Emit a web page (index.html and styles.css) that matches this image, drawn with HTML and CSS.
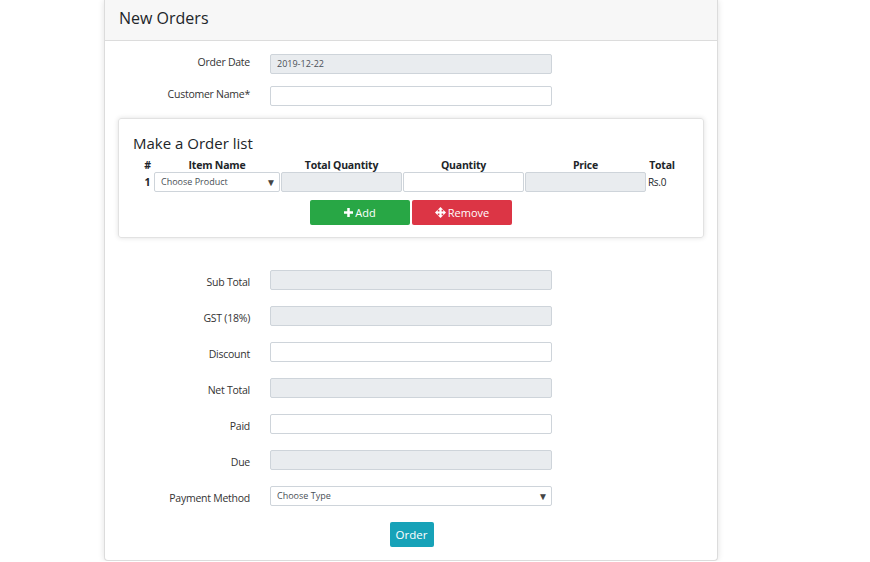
FILE: index.html
```html
<!DOCTYPE html>
<html>
<head>
<meta charset="utf-8">
<link rel="stylesheet" href="styles.css">
</head>
<body>
<div class="card">
  <div class="card-header">New Orders</div>
  <div class="card-body">
    <div class="row"><label class="lbl">Order Date</label><div class="field dis">2019-12-22</div></div>
    <div class="row"><label class="lbl">Customer Name*</label><div class="field"></div></div>

    <div class="inner">
      <div class="inner-title">Make a Order list</div>
      <div class="tbl">
        <div class="th">#</div>
        <div class="th">Item Name</div>
        <div class="th">Total Quantity</div>
        <div class="th">Quantity</div>
        <div class="th">Price</div>
        <div class="th">Total</div>
        <div class="td num">1</div>
        <div class="field sel small">Choose Product<span class="arrow">▼</span></div>
        <div class="field dis"></div>
        <div class="field"></div>
        <div class="field dis"></div>
        <div class="td rs">Rs.0</div>
      </div>
      <div class="btns">
        <div class="btn green"><svg class="ico" viewBox="0 0 10 10"><path d="M3.6 0h2.8v3.6H10v2.8H6.4V10H3.6V6.4H0V3.6h3.6z" fill="#fff"/></svg>Add</div>
        <div class="btn red"><svg class="ico mv" viewBox="0 0 12 12"><path d="M6 0L9 3H7.2V4.8H9V3L12 6 9 9V7.2H7.2V9H9L6 12 3 9H4.8V7.2H3V9L0 6 3 3V4.8H4.8V3H3z" fill="#fff"/></svg>Remove</div>
      </div>
    </div>

    <div class="totals">
      <div class="row r2"><label class="lbl">Sub Total</label><div class="field dis"></div></div>
      <div class="row r2"><label class="lbl">GST (18%)</label><div class="field dis"></div></div>
      <div class="row r2"><label class="lbl">Discount</label><div class="field"></div></div>
      <div class="row r2"><label class="lbl">Net Total</label><div class="field dis"></div></div>
      <div class="row r2"><label class="lbl">Paid</label><div class="field"></div></div>
      <div class="row r2"><label class="lbl">Due</label><div class="field dis"></div></div>
      <div class="row r2"><label class="lbl">Payment Method</label><div class="field sel">Choose Type<span class="arrow">▼</span></div></div>
    </div>
    <div class="order-wrap"><div class="btn teal">Order</div></div>
  </div>
</div>
</body>
</html>
```

FILE: styles.css
```css
* { box-sizing: border-box; }
body {
  margin: 0;
  background: #fff;
  font-family: "Open Sans", "Noto Sans", sans-serif;
  color: #212529;
}
.card {
  margin-left: 104px;
  width: 614px;
  height: 561px;
  border: 1px solid #dcdcdc;
  border-top: none;
  border-radius: 0 0 4px 4px;
  box-shadow: 0 0 6px rgba(0,0,0,0.12);
  background: #fff;
}
.card-header {
  height: 41px;
  background: #f7f7f7;
  border-bottom: 1px solid #dcdcdc;
  padding-left: 14px;
  font-size: 16px;
  line-height: 37px;
  color: #212529;
}
.card-body {
  padding: 13px 13px 0 13px;
}
.row {
  display: flex;
  align-items: center;
  gap: 20px;
  height: 20px;
  margin-bottom: 12px;
}
.lbl {
  width: 132px;
  text-align: right;
  font-size: 10.5px;
  color: #333;
  letter-spacing: -0.25px;
  position: relative;
  top: -2px;
}
.field {
  width: 282px;
  height: 20px;
  border: 1px solid #ced4da;
  border-radius: 2px;
  background: #fff;
  font-size: 9px;
  line-height: 18px;
  padding-left: 6px;
  color: #495057;
}
.field.dis { background: #e9ecef; }
.sel { position: relative; }
.arrow {
  position: absolute;
  right: 3px;
  top: 0;
  font-size: 10px;
  color: #444;
}
.inner {
  height: 120px;
  border: 1px solid #e2e2e2;
  border-radius: 3px;
  box-shadow: 0 0 5px rgba(0,0,0,0.12);
  padding: 14px 14px 0 14px;
}
.inner-title {
  font-size: 15px;
  line-height: 20px;
  color: #212529;
}
.tbl {
  display: grid;
  grid-template-columns: 11px 126px 121px 121px 121px 30px;
  grid-template-rows: 14px 20px;
  column-gap: 1px;
  margin-left: 9px;
  margin-top: 5px;
  align-items: center;
}
.th {
  font-size: 10.5px;
  font-weight: bold;
  text-align: center;
  line-height: 14px;
  letter-spacing: -0.2px;
}
.tbl .field { width: auto; }
.td { font-size: 10.5px; }
.num { font-weight: bold; text-align: center; }
.rs { font-size: 10px; letter-spacing: -0.3px; padding-left: 1px; }
.btns {
  display: flex;
  justify-content: center;
  gap: 2px;
  margin-top: 8px;
}
.btn {
  display: flex;
  align-items: center;
  justify-content: center;
  height: 25px;
  border-radius: 2px;
  color: #fff;
  font-size: 11px;
}
.green { background: #28a745; width: 100px; }
.red { background: #dc3545; width: 100px; }
.teal { background: #17a2b8; width: 44px; font-size: 11.5px; }
.ico { width: 9px; height: 9px; margin-right: 2px; }
.ico.mv { width: 11px; height: 11px; }
.totals { margin-top: 32px; }
.r2 { margin-bottom: 16px; }
.r2 .lbl { top: 2px; }
.order-wrap {
  display: flex;
  justify-content: center;
  padding-left: 1px;
}
```
